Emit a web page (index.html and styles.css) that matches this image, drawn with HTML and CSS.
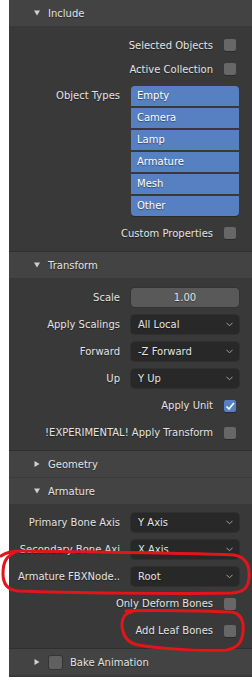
FILE: index.html
```html
<!DOCTYPE html>
<html lang="en">
<head>
    <meta charset="UTF-8">
    <title>FBX Export Options</title>
    <link rel="stylesheet" href="styles.css">
</head>
<body>
    <div class="editor">
        <!-- Include -->
        <section class="panel">
            <div class="panel-head">
                <svg class="arrow" viewBox="0 0 6 6"><polygon points="0,0.5 6,0.5 3,5.5"/></svg>
                <span>Include</span>
            </div>
            <div class="panel-body body-include">
                <div class="row check-row"><span class="label">Selected Objects</span><span class="check"></span></div>
                <div class="row check-row"><span class="label">Active Collection</span><span class="check"></span></div>
                <div class="row enum-row">
                    <span class="label">Object Types</span>
                    <div class="enum">
                        <div class="enum-item">Empty</div>
                        <div class="enum-item">Camera</div>
                        <div class="enum-item">Lamp</div>
                        <div class="enum-item">Armature</div>
                        <div class="enum-item">Mesh</div>
                        <div class="enum-item">Other</div>
                    </div>
                </div>
                <div class="row check-row custom"><span class="label">Custom Properties</span><span class="check"></span></div>
            </div>
        </section>

        <!-- Transform -->
        <section class="panel">
            <div class="panel-head">
                <svg class="arrow" viewBox="0 0 6 6"><polygon points="0,0.5 6,0.5 3,5.5"/></svg>
                <span>Transform</span>
            </div>
            <div class="panel-body body-transform">
                <div class="row field-row"><span class="label">Scale</span><div class="field number">1.00</div></div>
                <div class="row field-row"><span class="label">Apply Scalings</span><div class="field menu">All Local<svg class="chev" viewBox="0 0 8 5"><polyline points="0.5,0.5 4,4 7.5,0.5"/></svg></div></div>
                <div class="row field-row"><span class="label">Forward</span><div class="field menu">-Z Forward<svg class="chev" viewBox="0 0 8 5"><polyline points="0.5,0.5 4,4 7.5,0.5"/></svg></div></div>
                <div class="row field-row"><span class="label">Up</span><div class="field menu">Y Up<svg class="chev" viewBox="0 0 8 5"><polyline points="0.5,0.5 4,4 7.5,0.5"/></svg></div></div>
                <div class="row check-row tall"><span class="label">Apply Unit</span><span class="check on"><svg viewBox="0 0 12 12"><polyline points="2.5,6.5 5,9 9.8,3"/></svg></span></div>
                <div class="row check-row tall"><span class="label">!EXPERIMENTAL! Apply Transform</span><span class="check"></span></div>
            </div>
        </section>

        <!-- Geometry -->
        <section class="panel">
            <div class="panel-head">
                <svg class="arrow" viewBox="0 0 6 6"><polygon points="0.5,0 5.5,3 0.5,6"/></svg>
                <span>Geometry</span>
            </div>
        </section>

        <!-- Armature -->
        <section class="panel head-only">
            <div class="panel-head">
                <svg class="arrow" viewBox="0 0 6 6"><polygon points="0,0.5 6,0.5 3,5.5"/></svg>
                <span>Armature</span>
            </div>
            <div class="panel-body body-armature">
                <div class="row field-row"><span class="label">Primary Bone Axis</span><div class="field menu">Y Axis<svg class="chev" viewBox="0 0 8 5"><polyline points="0.5,0.5 4,4 7.5,0.5"/></svg></div></div>
                <div class="row field-row"><span class="label">Secondary Bone Axi</span><div class="field menu">X Axis<svg class="chev" viewBox="0 0 8 5"><polyline points="0.5,0.5 4,4 7.5,0.5"/></svg></div></div>
                <div class="row field-row"><span class="label">Armature FBXNode..</span><div class="field menu">Root<svg class="chev" viewBox="0 0 8 5"><polyline points="0.5,0.5 4,4 7.5,0.5"/></svg></div></div>
                <div class="row check-row tall"><span class="label">Only Deform Bones</span><span class="check"></span></div>
                <div class="row check-row tall"><span class="label">Add Leaf Bones</span><span class="check"></span></div>
            </div>
        </section>

        <!-- Bake Animation -->
        <section class="panel">
            <div class="panel-head">
                <svg class="arrow" viewBox="0 0 6 6"><polygon points="0.5,0 5.5,3 0.5,6"/></svg>
                <span class="check head-check"></span>
                <span>Bake Animation</span>
            </div>
        </section>
    </div>

    <!-- red annotations drawn over the screenshot -->
    <svg class="marks" viewBox="0 0 252 677">
        <path d="M 1 556 C 6 552, 12 551, 22 551 C 80 552, 190 553, 234 555 C 246 557, 250 566, 249 578 C 248 588, 244 592, 232 593 C 170 594, 70 593, 18 591 C 8 590, 3 584, 3 574 C 3 564, 5 557, 14 553"/>
        <path d="M 126 611 C 150 610, 200 611, 232 612 C 242 614, 244 622, 243 632 C 242 642, 238 648, 226 650 C 200 651, 160 649, 138 645 C 128 643, 123 636, 122 626 C 122 618, 124 613, 132 612"/>
    </svg>
</body>
</html>
```

FILE: styles.css
```css
/* Global Styles */
body {
    margin: 0;
    padding: 0;
    background: #fff;
    font-family: 'DejaVu Sans', sans-serif;
    font-size: 10px;
    color: #e4e4e4;
    width: 252px;
    height: 677px;
    overflow: hidden;
    position: relative;
}

.editor {
    margin-left: 9px;
    background: #393939;
    height: 677px;
}

/* Panels */
.panel + .panel {
    border-top: 1px solid #2f2f2f;
}

.panel.head-only {
    border-top-color: #3b3b3b;
}

.panel-head {
    height: 26px;
    background: #434343;
    display: flex;
    align-items: center;
    padding-left: 25px;
    text-shadow: 0 1px 1px rgba(0, 0, 0, 0.45);
}

.arrow {
    width: 6px;
    height: 6px;
    fill: #d0d0d0;
    margin-right: 8px;
}

.panel-body {
    background: #393939;
}

.body-include {
    padding: 7px 0 6px;
}

.body-transform {
    padding: 6px 0 4px;
}

.body-armature {
    padding: 5px 0 4px;
}

/* Rows */
.row {
    display: flex;
    align-items: center;
    text-shadow: 0 1px 1px rgba(0, 0, 0, 0.45);
}

.check-row {
    height: 24px;
    justify-content: flex-end;
    padding-right: 16px;
}

.check-row.tall {
    height: 27px;
}

.check-row.custom {
    margin-top: 5px;
}

.check-row .label {
    margin-right: 11px;
}

.field-row {
    height: 27px;
    padding-right: 13px;
}

.field-row .label,
.enum-row .label {
    width: 111px;
    flex-shrink: 0;
    text-align: right;
    white-space: nowrap;
    margin-right: 11px;
}

.enum-row {
    margin-top: 5px;
    align-items: flex-start;
    padding-right: 13px;
}

.enum-row .label {
    line-height: 20px;
}

/* Checkboxes */
.check {
    width: 12px;
    height: 12px;
    background: #676767;
    border-radius: 2px;
    box-shadow: 0 1px 0 #2a2a2a;
    flex-shrink: 0;
    display: flex;
}

.check.on {
    background: #5680c2;
}

.check svg {
    width: 12px;
    height: 12px;
    fill: none;
    stroke: #fff;
    stroke-width: 1.6;
}

.head-check {
    width: 13px;
    height: 13px;
    margin: 0 8px 0 1px;
    background: #606060;
    box-shadow: 0 0 0 1px #353535;
}

/* Enum buttons */
.enum {
    flex: 1;
    display: flex;
    flex-direction: column;
    gap: 2px;
}

.enum-item {
    height: 20px;
    line-height: 20px;
    padding-left: 6px;
    background: #5680c2;
    color: #fff;
}

.enum-item:first-child {
    border-radius: 4px 4px 0 0;
}

.enum-item:last-child {
    border-radius: 0 0 4px 4px;
    box-shadow: 0 1px 0 #2a2a2a;
}

/* Fields */
.field {
    flex: 1;
    height: 19px;
    border-radius: 4px;
    display: flex;
    align-items: center;
    box-sizing: border-box;
}

.field.number {
    background: #595959;
    justify-content: center;
    box-shadow: 0 0 0 1px #333;
}

.field.menu {
    background: #282828;
    padding: 0 6px 0 7px;
    justify-content: space-between;
    box-shadow: 0 0 0 1px #303030;
}

.chev {
    width: 7px;
    height: 5px;
    fill: none;
    stroke: #a8a8a8;
    stroke-width: 1.1;
}

/* Annotations */
.marks {
    position: absolute;
    left: 0;
    top: 0;
    width: 252px;
    height: 677px;
    pointer-events: none;
}

.marks path {
    fill: none;
    stroke: #e3151b;
    stroke-width: 3;
    stroke-linecap: round;
    stroke-linejoin: round;
}
```
